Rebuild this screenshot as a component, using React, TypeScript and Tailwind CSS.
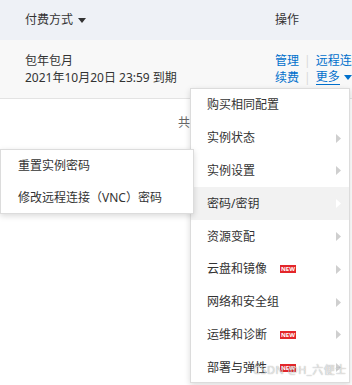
import React from 'react';

const font = { fontFamily: '"Noto Sans", "Noto Sans CJK SC", sans-serif' };

type Item = { label: string; arrow?: boolean; isNew?: boolean; active?: boolean };

const items: Item[] = [
  { label: '购买相同配置' },
  { label: '实例状态', arrow: true },
  { label: '实例设置', arrow: true },
  { label: '密码/密钥', arrow: true, active: true },
  { label: '资源变配', arrow: true },
  { label: '云盘和镜像', arrow: true, isNew: true },
  { label: '网络和安全组', arrow: true },
  { label: '运维和诊断', arrow: true, isNew: true },
  { label: '部署与弹性', arrow: true, isNew: true },
];

const Caret = ({ className }: { className: string }) => (
  <svg width="8" height="5" viewBox="0 0 8 5" className={className}>
    <path d="M0 0h8L4 5z" fill="currentColor" />
  </svg>
);

const NewBadge = () => (
  <span className="ml-[13px] inline-flex h-[8px] w-[16px] items-center justify-center bg-[#e3262b] text-[6px] font-bold leading-none text-white">
    NEW
  </span>
);

export default function App() {
  return (
    <div className="relative h-[385px] w-[352px] overflow-hidden bg-white text-[12px] text-[#333]" style={font}>
      {/* table header */}
      <div className="flex h-[40px] items-center bg-[#eef1f6]">
        <div className="flex w-[275px] shrink-0 items-center pl-[25px]">
          <span>付费方式</span>
          <Caret className="ml-[5px] text-[#333]" />
        </div>
        <span>操作</span>
      </div>

      {/* row */}
      <div className="flex h-[59px] items-center border-b border-[#e3e3e3] bg-[#f8f8f8]">
        <div className="flex w-[275px] shrink-0 flex-col gap-[1px] pl-[25px] leading-[16px]">
          <span>包年包月</span>
          <span>2021年10月20日 23:59 到期</span>
        </div>
        <div className="flex shrink-0 flex-col gap-[1px] whitespace-nowrap leading-[16px] text-[#0070cc]">
          <div className="flex items-center">
            <span>管理</span>
            <span className="mx-[5px] text-[#d8d8d8]">|</span>
            <span>远程连接</span>
          </div>
          <div className="flex items-center">
            <span>续费</span>
            <span className="mx-[5px] text-[#d8d8d8]">|</span>
            <span className="border-b border-[#0070cc] leading-[14px]">更多</span>
            <Caret className="ml-[4px] text-[#0070cc]" />
          </div>
        </div>
      </div>

      <div className="pl-[178px] pt-[15px] text-[#666]">共</div>

      {/* main dropdown */}
      <div className="absolute left-[190px] top-[88px] h-[295px] w-[160px] overflow-hidden border border-[#dcdcdc] bg-white shadow-[0_2px_6px_rgba(0,0,0,0.15)]">
        {items.map((it) => (
          <div
            key={it.label}
            className={`flex h-[32.8px] items-center pl-[16px] pr-[8px] ${it.active ? 'bg-[#f2f2f2]' : ''}`}
          >
            <span>{it.label}</span>
            {it.isNew && <NewBadge />}
            {it.arrow && (
              <svg width="5" height="9" viewBox="0 0 5 9" className="ml-auto">
                <path d="M0 0l5 4.5L0 9z" fill={it.active ? '#ffffff' : '#cfcfcf'} />
              </svg>
            )}
          </div>
        ))}
      </div>

      {/* sub menu */}
      <div className="absolute left-0 top-[149px] w-[194px] border border-[#dcdcdc] bg-white shadow-[0_2px_6px_rgba(0,0,0,0.15)]">
        <div className="flex h-[32px] items-center pl-[17px]">重置实例密码</div>
        <div className="flex h-[31px] items-center pl-[17px]">修改远程连接（VNC）密码</div>
      </div>

      {/* watermark */}
      <div
        className="absolute left-[253px] top-[362px] whitespace-nowrap text-[11px] tracking-[0.5px] text-white/70"
        style={{ textShadow: '0 0 1px rgba(0,0,0,0.45)' }}
      >
        CSDN @H_六便士
      </div>
    </div>
  );
}
